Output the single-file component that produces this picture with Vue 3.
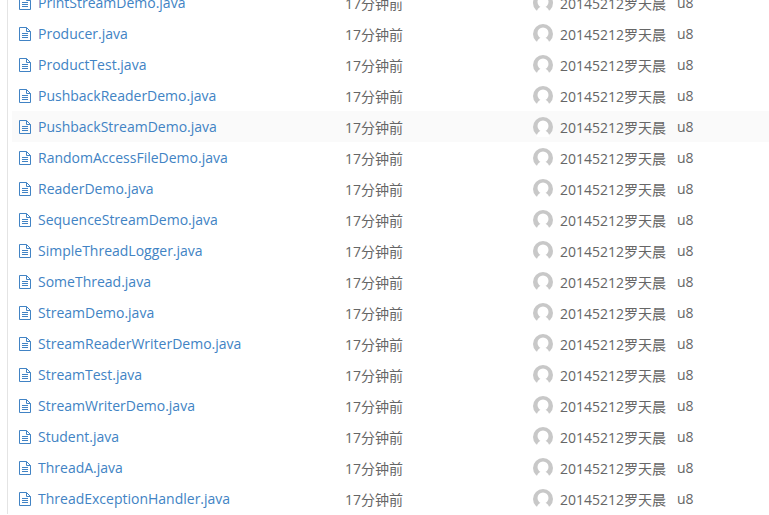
<script setup>
const files = ['PrintStreamDemo.java','Producer.java','ProductTest.java','PushbackReaderDemo.java','PushbackStreamDemo.java','RandomAccessFileDemo.java','ReaderDemo.java','SequenceStreamDemo.java','SimpleThreadLogger.java','SomeThread.java','StreamDemo.java','StreamReaderWriterDemo.java','StreamTest.java','StreamWriterDemo.java','Student.java','ThreadA.java','ThreadExceptionHandler.java']
</script>

<template>
  <div class="page">
    <div class="list">
      <div v-for="f in files" :key="f" class="row" :class="{ hover: f === 'PushbackStreamDemo.java' }">
        <div class="name">
          <svg class="icon" width="14" height="16" viewBox="0 0 14 16" fill="none" stroke="#4183c4" stroke-width="1">
            <path d="M1.5 1.5H8.5L12.5 5.5V14.5H1.5Z" />
            <path d="M8.5 1.5V5.5H12.5" />
            <path d="M4 7.5H10M4 9.5H10M4 11.5H10" />
          </svg>
          <span>{{ f }}</span>
        </div>
        <div class="time">17分钟前</div>
        <div class="author">
          <svg class="avatar" width="20" height="20" viewBox="0 0 20 20">
            <circle cx="10" cy="10" r="10" fill="#c8c8c8" />
            <circle cx="10" cy="9" r="5.5" fill="#fff" />
            <path d="M3.5 20C4 15 7 13.5 10 13.5S16 15 16.5 20Z" fill="#fff" />
          </svg>
          <span class="who">20145212罗天晨</span>
          <span class="branch">u8</span>
        </div>
      </div>
    </div>
  </div>
</template>

<style>
html, body { margin: 0; background: #fff; overflow: hidden; }
</style>

<style scoped>
.page {
  height: 515px;
  overflow: hidden;
  font-family: "Open Sans", "Noto Sans CJK SC", sans-serif;
  font-size: 14px;
  color: #666;
}
.list {
  margin-top: -13px;
  margin-left: 7px;
  padding-left: 4px;
  border-left: 1px solid #e4e4e4;
}
.row {
  height: 31px;
  display: flex;
  align-items: center;
}
.hover { background: #fafafa; }
.name {
  width: 333px;
  display: flex;
  align-items: center;
  color: #4183c4;
}
.icon { margin: 0 6px 0 6px; flex: none; }
.time { width: 188px; }
.author { display: flex; align-items: center; }
.avatar { margin-right: 7px; flex: none; }
.who { width: 117px; }
</style>
